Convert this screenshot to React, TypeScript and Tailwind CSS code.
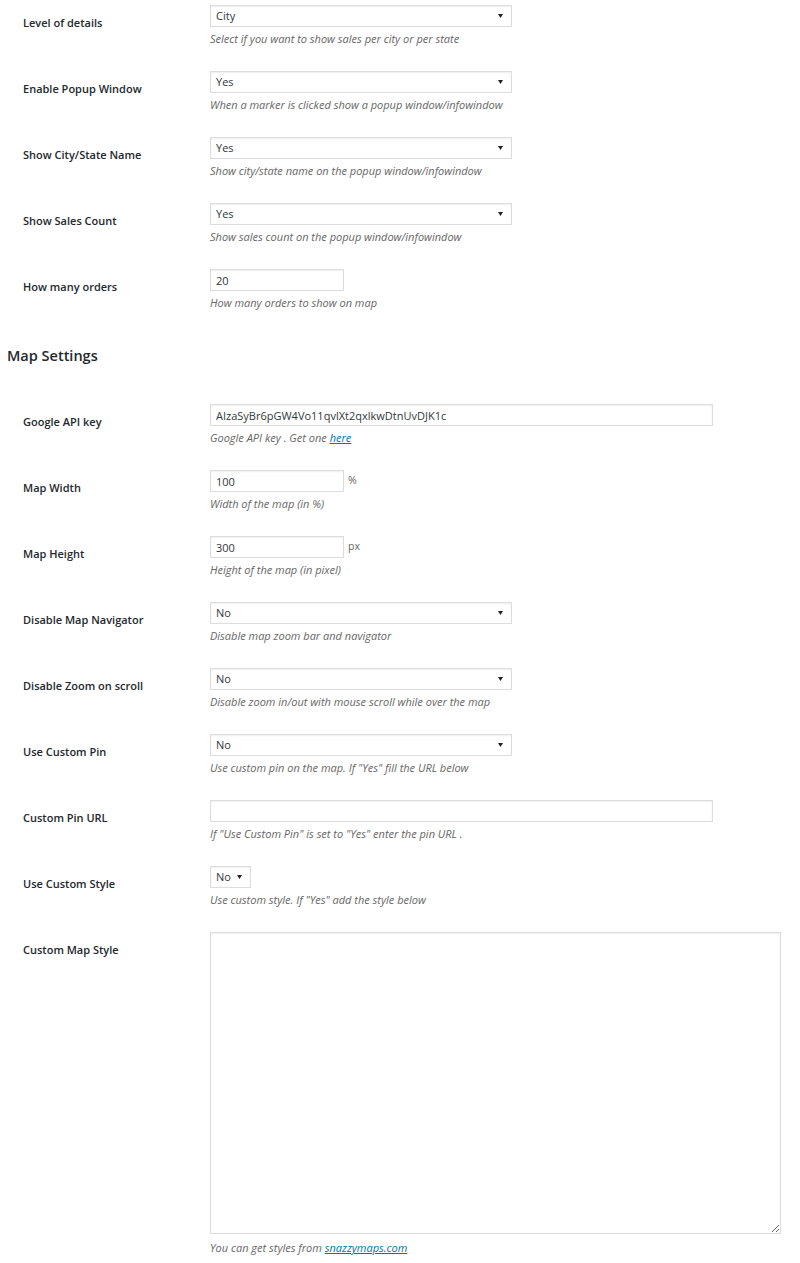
import React from 'react';

type Row = {
  label: string;
  kind: 'select' | 'input' | 'textarea';
  value?: string;
  width: string;
  unit?: string;
  desc: React.ReactNode;
};

const link = 'text-[#0073aa] underline';

const general: Row[] = [
  { label: 'Level of details', kind: 'select', value: 'City', width: 'w-[302px]', desc: 'Select if you want to show sales per city or per state' },
  { label: 'Enable Popup Window', kind: 'select', value: 'Yes', width: 'w-[302px]', desc: 'When a marker is clicked show a popup window/infowindow' },
  { label: 'Show City/State Name', kind: 'select', value: 'Yes', width: 'w-[302px]', desc: 'Show city/state name on the popup window/infowindow' },
  { label: 'Show Sales Count', kind: 'select', value: 'Yes', width: 'w-[302px]', desc: 'Show sales count on the popup window/infowindow' },
  { label: 'How many orders', kind: 'input', value: '20', width: 'w-[134px]', desc: 'How many orders to show on map' },
];

const map: Row[] = [
  {
    label: 'Google API key',
    kind: 'input',
    value: 'AIzaSyBr6pGW4Vo11qvlXt2qxlkwDtnUvDJK1c',
    width: 'w-[503px]',
    desc: (
      <>
        Google API key . Get one <a className={link}>here</a>
      </>
    ),
  },
  { label: 'Map Width', kind: 'input', value: '100', width: 'w-[134px]', unit: '%', desc: 'Width of the map (in %)' },
  { label: 'Map Height', kind: 'input', value: '300', width: 'w-[134px]', unit: 'px', desc: 'Height of the map (in pixel)' },
  { label: 'Disable Map Navigator', kind: 'select', value: 'No', width: 'w-[302px]', desc: 'Disable map zoom bar and navigator' },
  { label: 'Disable Zoom on scroll', kind: 'select', value: 'No', width: 'w-[302px]', desc: 'Disable zoom in/out with mouse scroll while over the map' },
  { label: 'Use Custom Pin', kind: 'select', value: 'No', width: 'w-[302px]', desc: 'Use custom pin on the map. If "Yes" fill the URL below' },
  { label: 'Custom Pin URL', kind: 'input', value: '', width: 'w-[503px]', desc: 'If "Use Custom Pin" is set to "Yes" enter the pin URL .' },
  { label: 'Use Custom Style', kind: 'select', value: 'No', width: 'w-[41px]', desc: 'Use custom style. If "Yes" add the style below' },
  {
    label: 'Custom Map Style',
    kind: 'textarea',
    width: 'w-[571px]',
    desc: (
      <>
        You can get styles from <a className={link}>snazzymaps.com</a>
      </>
    ),
  },
];

function Control({ row }: { row: Row }) {
  const box = 'border border-[#dddddd] bg-white shadow-[inset_0_1px_2px_rgba(0,0,0,0.07)] text-[11px] text-[#32373c]';
  if (row.kind === 'select') {
    return (
      <div className={`${row.width} ${box} h-[22px] flex items-center justify-between pl-[5px] pr-[8px]`}>
        <span>{row.value}</span>
        <svg width="5" height="4" viewBox="0 0 5 4" className="shrink-0">
          <path d="M0 0h5L2.5 4z" fill="#222" />
        </svg>
      </div>
    );
  }
  if (row.kind === 'textarea') {
    return <textarea className={`${row.width} ${box} h-[302px] block outline-none`} />;
  }
  return (
    <div className="flex items-center">
      <input
        defaultValue={row.value}
        readOnly
        className={`${row.width} ${box} h-[22px] px-[5px] outline-none`}
      />
      {row.unit && <span className="ml-[4px] text-[10.5px] text-[#666]">{row.unit}</span>}
    </div>
  );
}

function FieldRow({ row }: { row: Row }) {
  return (
    <div className="flex pl-[23px] pt-[12px] pb-[12px]">
      <div className="w-[187px] shrink-0 pt-[10px] text-[11px] leading-[15px] font-semibold text-[#23282d]">
        {row.label}
      </div>
      <div>
        <Control row={row} />
        <p className={`${row.kind === 'textarea' ? 'mt-[6px]' : 'mt-[4px]'} text-[11px] leading-[16px] italic text-[#666]`}>
          {row.desc}
        </p>
      </div>
    </div>
  );
}

export default function App() {
  return (
    <div className="h-[1263px] bg-white font-['Open_Sans',sans-serif] overflow-hidden">
      <div className="-mt-[7px]">
        {general.map((r) => (
          <FieldRow key={r.label} row={r} />
        ))}
        <h2 className="pl-[7px] mt-[23px] mb-[26px] text-[14.5px] leading-[20px] font-semibold text-[#23282d]">
          Map Settings
        </h2>
        {map.map((r) => (
          <FieldRow key={r.label} row={r} />
        ))}
      </div>
    </div>
  );
}
